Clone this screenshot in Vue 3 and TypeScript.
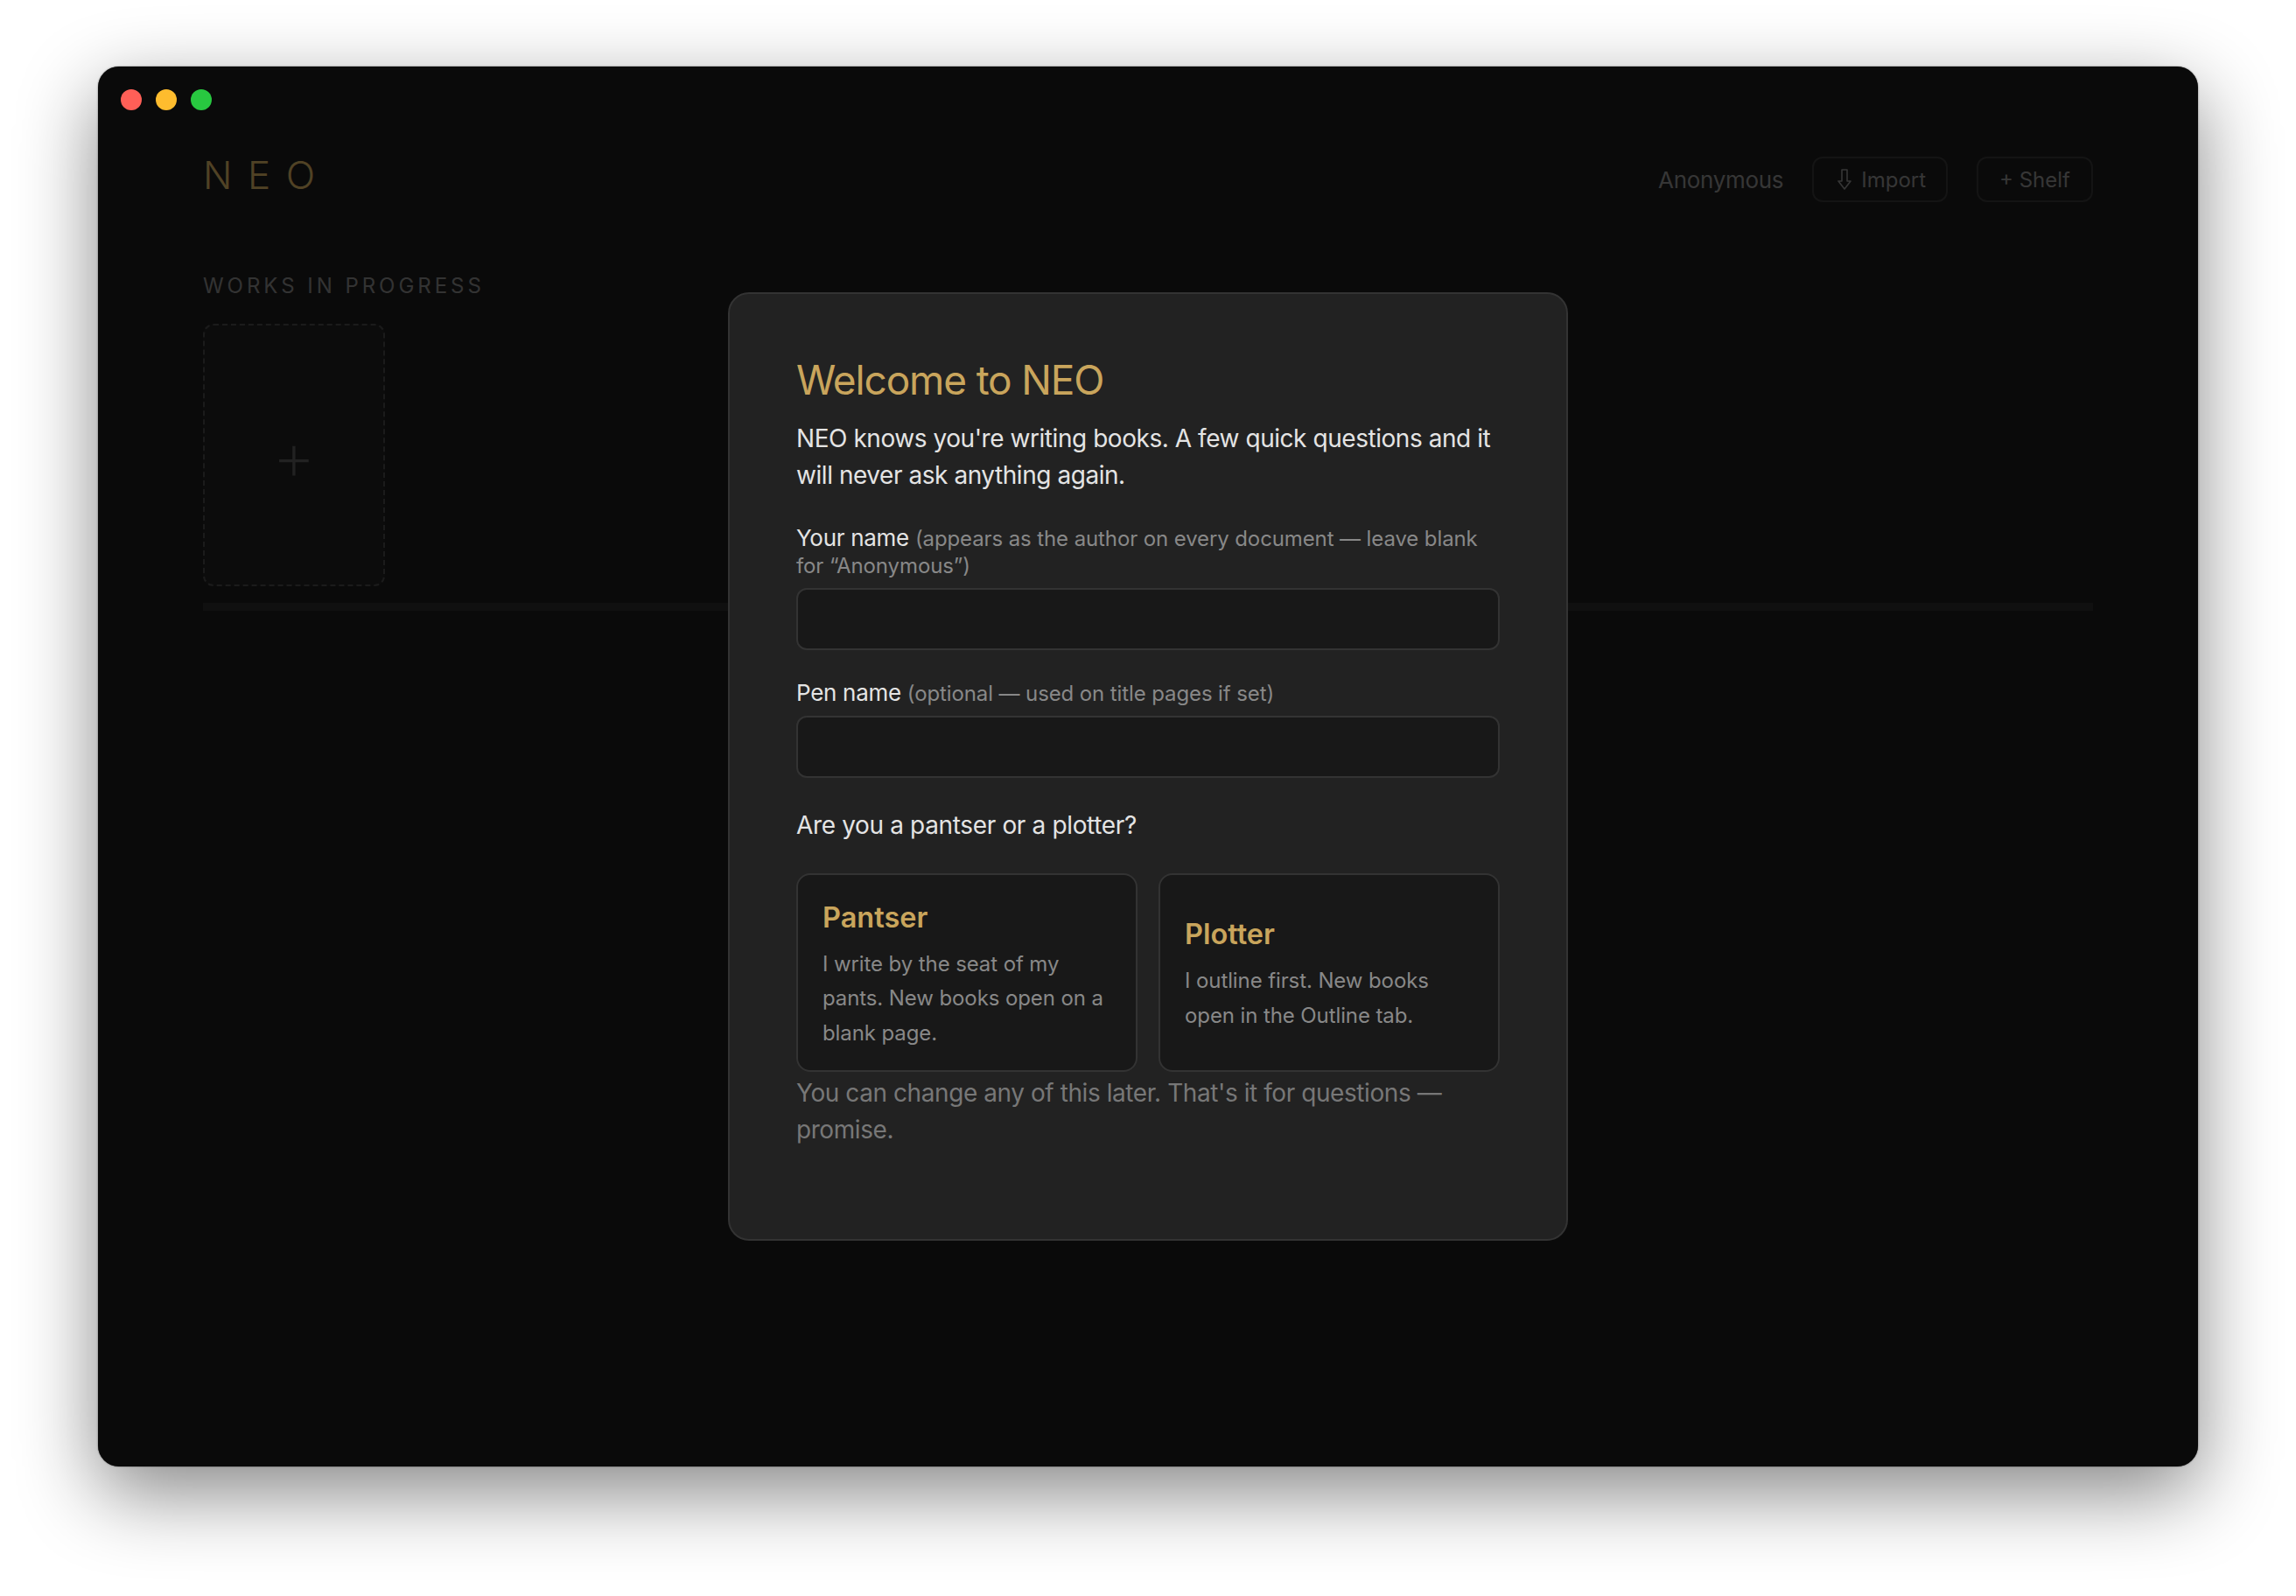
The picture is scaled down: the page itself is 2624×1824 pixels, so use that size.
<script setup lang="ts">
import { ref } from 'vue'

const authorName = ref('')
const penName = ref('')

const modes = [
  { id: 'pantser', title: 'Pantser', text: 'I write by the seat of my pants. New books open on a blank page.' },
  { id: 'plotter', title: 'Plotter', text: 'I outline first. New books open in the Outline tab.' },
]
</script>

<template>
  <div class="page">
    <div class="window">
      <div class="titlebar">
        <span class="light red"></span>
        <span class="light yellow"></span>
        <span class="light green"></span>
      </div>

      <main class="library">
        <header class="top">
          <div class="logo">NEO</div>
          <div class="actions">
            <span class="author">Anonymous</span>
            <button class="ghost import">
              <svg width="16" height="24" viewBox="0 0 16 24" fill="none" stroke="currentColor" stroke-width="1.6" stroke-linejoin="round">
                <path d="M5 1h6v13h4l-7 9-7-9h4z" />
              </svg>
              Import
            </button>
            <button class="ghost shelf-btn">+ Shelf</button>
          </div>
        </header>

        <h3 class="shelf-title">WORKS IN PROGRESS</h3>
        <div class="add-book">+</div>
        <div class="shelf-line"></div>
      </main>

      <div class="overlay">
        <div class="modal">
          <h2>Welcome to NEO</h2>
          <p class="intro">NEO knows you're writing books. A few quick questions and it will never ask anything again.</p>

          <label class="field name-field">
            <span class="label">Your name <span class="hint">(appears as the author on every document — leave blank for “Anonymous”)</span></span>
            <input v-model="authorName" type="text" />
          </label>

          <label class="field">
            <span class="label">Pen name <span class="hint">(optional — used on title pages if set)</span></span>
            <input v-model="penName" type="text" />
          </label>

          <p class="question">Are you a pantser or a plotter?</p>

          <div class="modes">
            <button v-for="m in modes" :key="m.id" class="mode">
              <span class="mode-title">{{ m.title }}</span>
              <span class="mode-text">{{ m.text }}</span>
            </button>
          </div>

          <p class="footnote">You can change any of this later. That's it for questions — promise.</p>
        </div>
      </div>
    </div>
  </div>
</template>

<style>
html, body {
  margin: 0;
  background: #fff;
}
</style>

<style scoped>
.page {
  width: 2624px;
  height: 1824px;
  box-sizing: border-box;
  padding: 76px 112px 148px;
  background: #fff;
  font-family: Inter, "Liberation Sans", sans-serif;
}

.window {
  position: relative;
  height: 1600px;
  border-radius: 24px;
  background: #1a1a1a;
  box-shadow: 0 0 2px rgba(0,0,0,0.5), 0 30px 90px rgba(0,0,0,0.48);
}

.titlebar {
  position: relative;
  z-index: 3;
  height: 76px;
  display: flex;
  align-items: center;
  gap: 16px;
  padding-left: 26px;
}

.light {
  width: 24px;
  height: 24px;
  border-radius: 50%;
}
.red { background: #ff5f57; }
.yellow { background: #febc2e; }
.green { background: #28c840; }

.library {
  padding: 0 120px;
}

.top {
  display: flex;
  align-items: center;
  justify-content: space-between;
  margin-top: 27px;
  height: 52px;
}

.logo {
  margin-bottom: 10px;
  font-size: 44px;
  font-weight: 300;
  letter-spacing: 0.4em;
  color: #c9a55c;
}

.actions {
  display: flex;
  align-items: center;
  gap: 33px;
}

.author {
  font-size: 26px;
  letter-spacing: -0.3px;
  color: #888;
}

.ghost {
  height: 52px;
  box-sizing: border-box;
  border: 2px solid #333;
  border-radius: 12px;
  background: transparent;
  color: #888;
  font: 400 24px Inter, sans-serif;
  display: flex;
  align-items: center;
  gap: 11px;
}
.import { padding: 0 23px 0 27px; }
.shelf-btn { padding: 0 24px; }

.shelf-title {
  margin: 81px 0 0;
  font-size: 24px;
  line-height: 30px;
  font-weight: 400;
  letter-spacing: 0.165em;
  color: #808080;
}

.add-book {
  width: 208px;
  height: 300px;
  margin-top: 28px;
  box-sizing: border-box;
  border: 2px dashed #444;
  border-radius: 12px;
  background: #1f1f1f;
  color: #555;
  font-size: 78px;
  font-weight: 200;
  display: flex;
  align-items: center;
  justify-content: center;
}

.shelf-line {
  height: 9px;
  margin-top: 19px;
  background: #282828;
}

.overlay {
  position: absolute;
  inset: 0;
  z-index: 2;
  border-radius: 24px;
  background: rgba(0,0,0,0.6);
  display: flex;
  align-items: center;
  justify-content: center;
}

.modal {
  width: 960px;
  height: 1084px;
  box-sizing: border-box;
  padding: 76px;
  background: #222;
  border: 2px solid #333;
  border-radius: 24px;
}

h2 {
  margin: 0 0 24px;
  font-size: 46px;
  line-height: 44px;
  font-weight: 400;
  letter-spacing: -1.15px;
  color: #c9a55c;
}

.intro {
  margin: 0 0 36px;
  font-size: 28px;
  line-height: 42px;
  letter-spacing: -0.45px;
  color: #e4e4e4;
}

.field {
  display: block;
  margin-bottom: 31px;
}
.name-field {
  margin-bottom: 34px;
}

.label {
  display: block;
  margin-bottom: 10px;
  font-size: 26px;
  line-height: 30px;
  letter-spacing: -0.3px;
  color: #e4e4e4;
}

.hint {
  font-size: 24px;
  letter-spacing: -0.11px;
  color: #888;
}

input {
  display: block;
  width: 100%;
  height: 71px;
  box-sizing: border-box;
  background: #181818;
  border: 2px solid #333;
  border-radius: 12px;
  outline: none;
  color: #e4e4e4;
  font: 400 28px Inter, sans-serif;
}

.question {
  margin: 33px 0 34px;
  font-size: 28px;
  line-height: 42px;
  letter-spacing: -0.35px;
  color: #e4e4e4;
}

.modes {
  display: grid;
  grid-template-columns: 1fr 1fr;
  gap: 24px;
}

.mode {
  height: 227px;
  box-sizing: border-box;
  padding: 4px 28px 0;
  background: #181818;
  border: 2px solid #333;
  border-radius: 16px;
  font-family: inherit;
  text-align: left;
  display: flex;
  flex-direction: column;
  justify-content: center;
}

.mode-title {
  margin-bottom: 11px;
  font-size: 32.5px;
  line-height: 44px;
  font-weight: 600;
  color: #c9a55c;
}

.mode-text {
  font-size: 24px;
  line-height: 39.6px;
  letter-spacing: -0.1px;
  color: #888;
}

.footnote {
  margin: 3px 0 0;
  font-size: 28px;
  line-height: 42px;
  letter-spacing: -0.43px;
  color: #777;
}
</style>
